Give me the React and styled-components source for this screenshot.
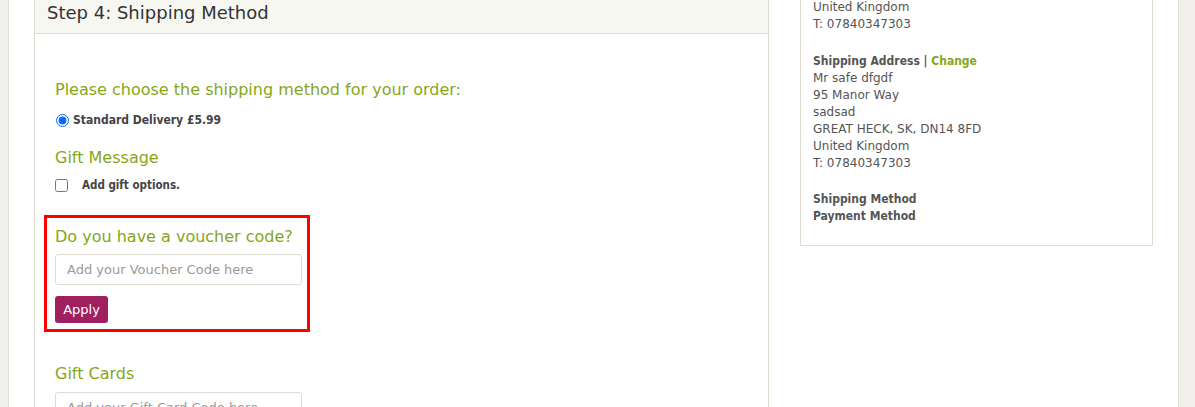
import React from 'react'
import styled, { createGlobalStyle } from 'styled-components'

const GlobalStyle = createGlobalStyle`
    html, body {
        margin: 0;
        padding: 0;
        background: #f1f0ec;
        overflow: hidden;
    }
    body {
        font-family: "DejaVu Sans", Verdana, sans-serif;
        color: #555;
    }
`

const Page = styled.div`
    margin-left: 8px;
    width: 1171px;
    height: 407px;
    background: #fff;
    border-left: 1px solid #e2e1d9;
    border-right: 1px solid #e2e1d9;
    box-sizing: border-box;
    padding-left: 25px;
    display: flex;
    align-items: flex-start;
    gap: 31px;
`

const Panel = styled.div`
    width: 735px;
    height: 420px;
    box-sizing: border-box;
    border-left: 1px solid #dedcd0;
    border-right: 1px solid #dedcd0;
`

const PanelHeader = styled.div`
    height: 34px;
    box-sizing: border-box;
    background: #f7f7f2;
    border-bottom: 1px solid #dedcd0;
    padding: 2px 12px 0;
    font-size: 18px;
    line-height: 22px;
    color: #333;
`

const PanelBody = styled.div`
    padding: 46px 20px 0;
`

const Heading = styled.h3`
    margin: ${p => p.$top || 0}px 0 0;
    font-size: 16px;
    line-height: 20px;
    font-weight: normal;
    color: #86a61a;
    white-space: nowrap;
`

const OptionRow = styled.label`
    display: flex;
    align-items: center;
    height: 14px;
    margin-top: ${p => p.$top || 0}px;
    font-family: "DejaVu Sans Condensed", "DejaVu Sans", sans-serif;
    font-size: ${p => p.$size || 12}px;
    font-weight: bold;
    color: #444;
    gap: ${p => p.$gap || 4}px;
`

const Radio = styled.input`
    width: 13px;
    height: 13px;
    margin: 0 0 0 1px;
    accent-color: #0a6cff;
`

const Check = styled.input`
    width: 13px;
    height: 13px;
    margin: 0;
`

const VoucherBox = styled.div`
    width: 266px;
    box-sizing: border-box;
    margin: 23px 0 0 -11px;
    border: 3px solid #ff0000;
    padding: 9px 8px 6px;
`

const CodeInput = styled.input`
    display: block;
    width: 247px;
    height: 31px;
    box-sizing: border-box;
    margin-top: ${p => p.$top || 8}px;
    border: 1px solid #dedcd0;
    border-radius: 3px;
    padding: 0 11px;
    font-family: "DejaVu Sans", Verdana, sans-serif;
    font-size: 13px;
    color: #555;
    &::placeholder {
        color: #9a9a9a;
    }
`

const ApplyButton = styled.button`
    display: block;
    margin-top: 11px;
    width: 53px;
    height: 27px;
    border: none;
    border-radius: 3px;
    background: #a01f5f;
    color: #fff;
    font-family: "DejaVu Sans", Verdana, sans-serif;
    font-size: 13px;
    padding: 0;
`

const Sidebar = styled.div`
    width: 353px;
    box-sizing: border-box;
    border: 1px solid #dedcd0;
    border-top: none;
    padding: 0 12px 20px;
    font-size: 12px;
    line-height: 17px;
    color: #555;
`

const Block = styled.div`
    margin-top: ${p => p.$top || 0}px;
`

const Strong = styled.div`
    font-family: "DejaVu Sans Condensed", "DejaVu Sans", sans-serif;
    font-weight: bold;
    font-size: 12px;
    color: #555;
`

const ChangeLink = styled.a`
    color: #86a61a;
    text-decoration: none;
`

function App() {
    return (
        <>
            <GlobalStyle />
            <Page>
                <Panel>
                    <PanelHeader>Step 4: Shipping Method</PanelHeader>
                    <PanelBody>
                        <Heading>Please choose the shipping method for your order:</Heading>
                        <OptionRow $top={13} $gap={4} $size={12}>
                            <Radio type="radio" name="ship" defaultChecked />
                            Standard Delivery £5.99
                        </OptionRow>
                        <Heading $top={21}>Gift Message</Heading>
                        <OptionRow $top={10} $gap={14} $size={11.5}>
                            <Check type="checkbox" />
                            Add gift options.
                        </OptionRow>
                        <VoucherBox>
                            <Heading>Do you have a voucher code?</Heading>
                            <CodeInput $top={7} placeholder="Add your Voucher Code here" />
                            <ApplyButton>Apply</ApplyButton>
                        </VoucherBox>
                        <Heading $top={32}>Gift Cards</Heading>
                        <CodeInput placeholder="Add your Gift Card Code here" />
                    </PanelBody>
                </Panel>
                <Sidebar>
                    <Block $top={-1}>
                        United Kingdom<br />
                        T: 07840347303
                    </Block>
                    <Block $top={20}>
                        <Strong>
                            Shipping Address | <ChangeLink href="#">Change</ChangeLink>
                        </Strong>
                        Mr safe dfgdf<br />
                        95 Manor Way<br />
                        sadsad<br />
                        GREAT HECK, SK, DN14 8FD<br />
                        United Kingdom<br />
                        T: 07840347303
                    </Block>
                    <Block $top={19}>
                        <Strong>Shipping Method</Strong>
                        <Strong>Payment Method</Strong>
                    </Block>
                </Sidebar>
            </Page>
        </>
    )
}

export default App
